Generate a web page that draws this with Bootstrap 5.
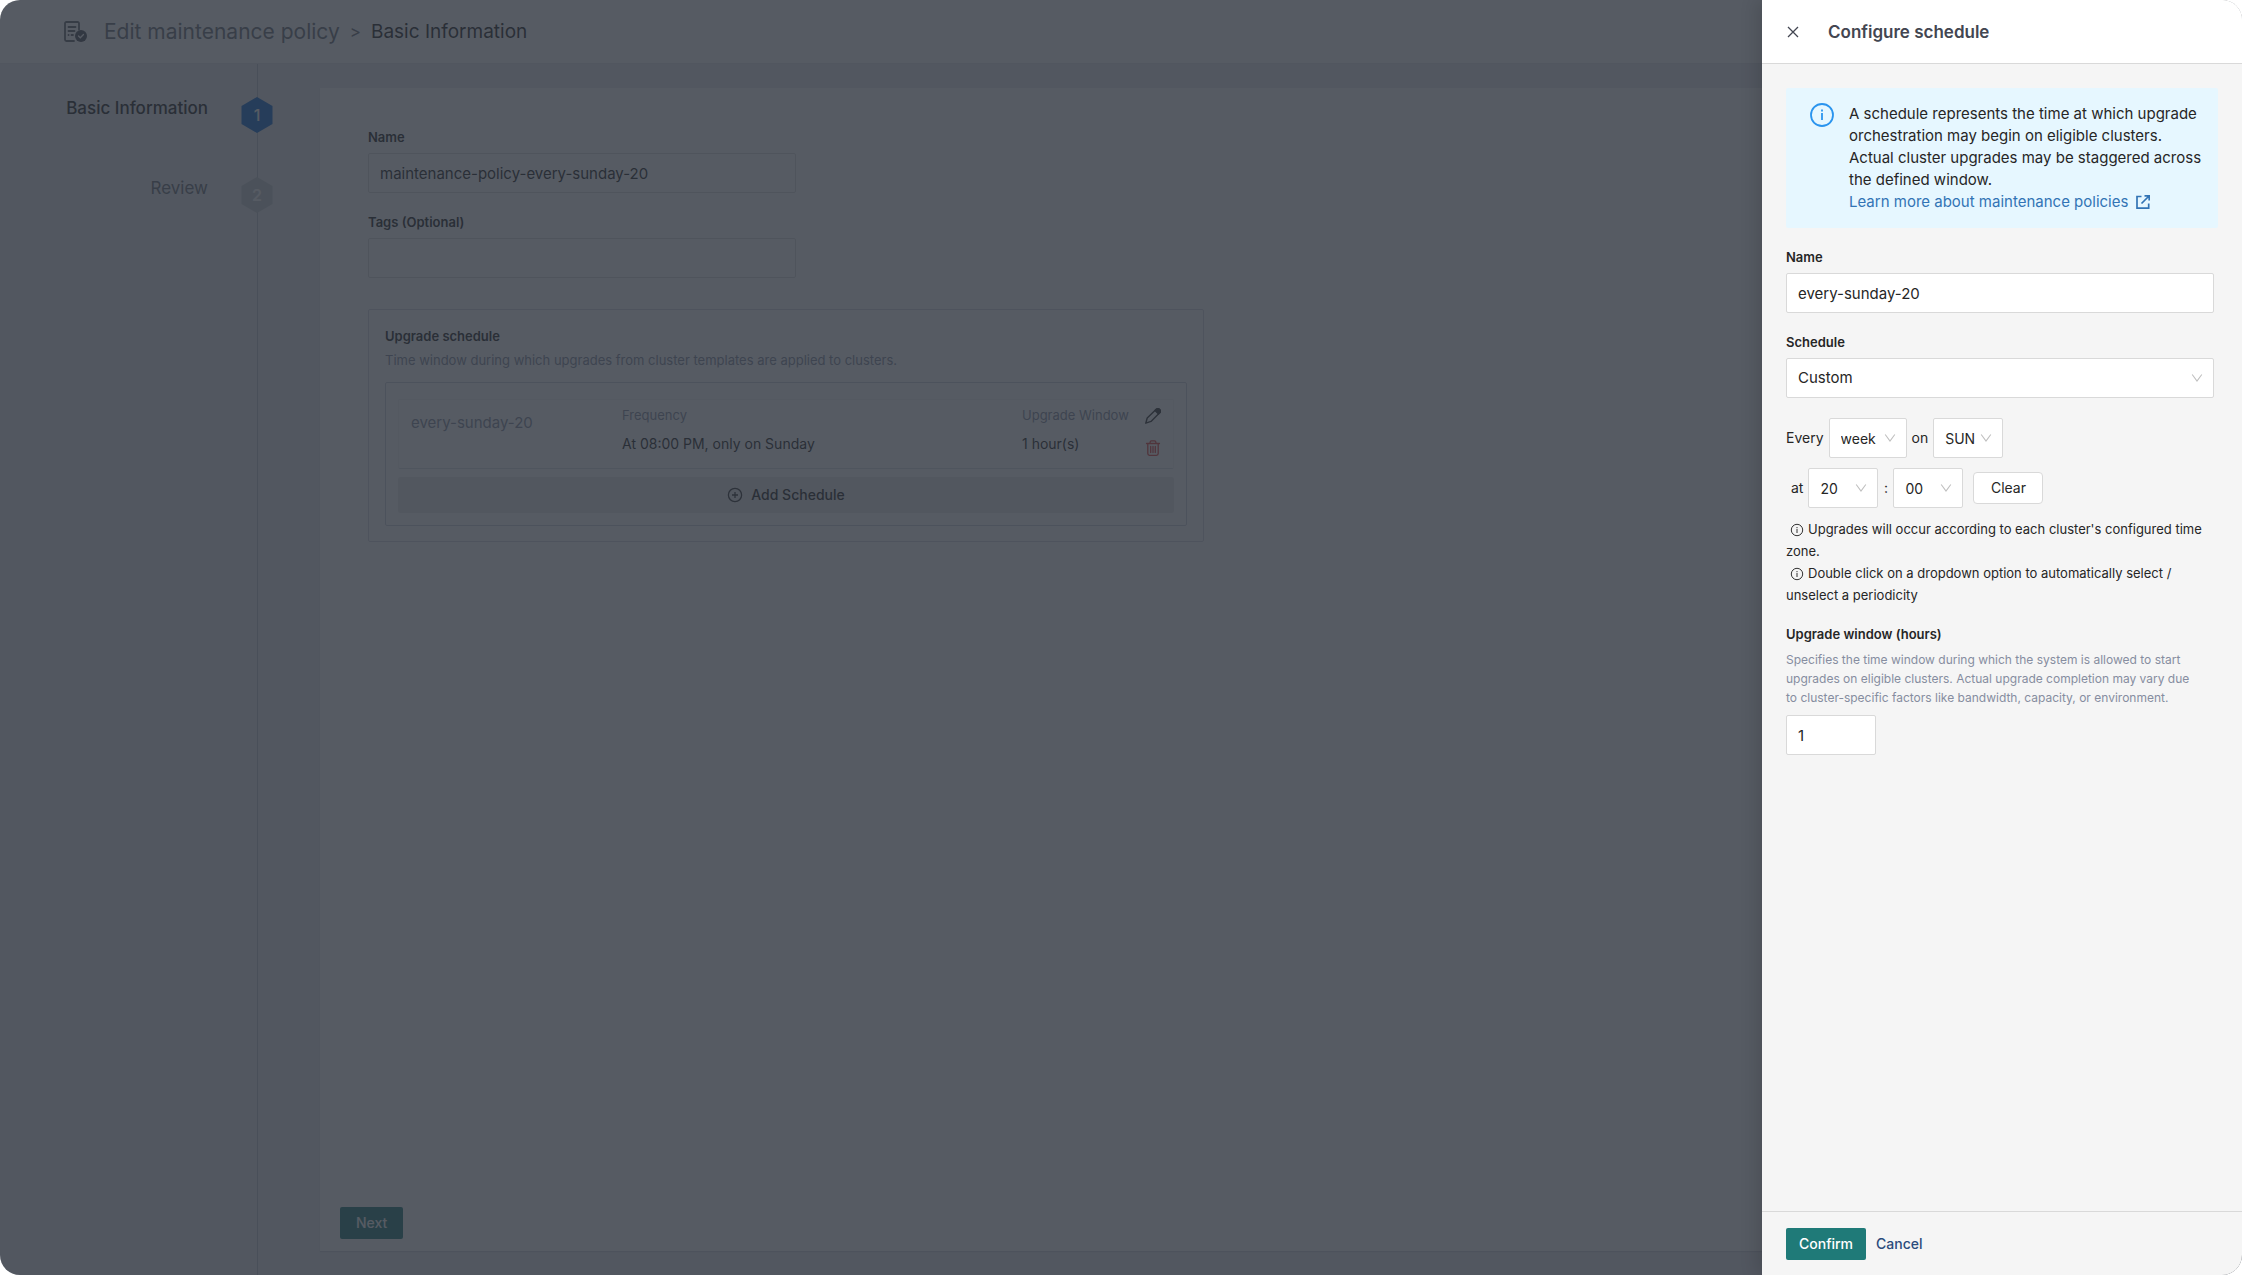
<!DOCTYPE html>
<html lang="en">
<head>
<meta charset="utf-8">
<meta name="viewport" content="width=device-width, initial-scale=1">
<title>Edit maintenance policy</title>
<link href="https://cdn.jsdelivr.net/npm/bootstrap@5.3.0/dist/css/bootstrap.min.css" rel="stylesheet">
<style>
  body { font-family: Inter, "Open Sans", sans-serif; font-size: 15px; line-height: 22px; color: #262626; background: #fff; }
  .app-window { border-radius: 20px; background: #e8eaee; height: 100vh; }
  .app-header { height: 64px; padding: 0 64px; background: #fff; border-bottom: 1px solid #e4e6ea; }
  .crumb-root { font-size: 21px; color: #6b6f78; }
  .crumb-sep { font-size: 17px; color: #6b6f78; margin: 0 10px; }
  .crumb-here { font-size: 19px; color: #262626; }
  .steps-col { width: 320px; }
  .step-list { position: relative; padding-top: 33px; width: 274px; }
  .step-list::before { content: ""; position: absolute; top: 0; bottom: 0; left: 257px; width: 1px; background: #bcc0ca; }
  .step-item { height: 80px; gap: 32px; font-size: 17px; color: #6b6f78; }
  .step-item.current { color: #262626; font-weight: 500; }
  .step-item svg { position: relative; }
  .page-panel { background: #fff; margin: 24px 24px 24px 0; padding: 38px 20px 12px; box-shadow: 0 1px 1px #d0d3da; }
  .panel-content { padding: 0 28px; }
  .panel-content .hint { font-size: 13px; }
  .field-label { font-size: 13px; line-height: 22px; font-weight: 600; color: #262626; margin-bottom: 5px; display: block; }
  .field-box { width: 428px; max-width: 100%; height: 40px; border: 1px solid #d9d9d9; border-radius: 2px; font-size: 15px; padding: 0 11px; color: #262626; background-color: #fff; }
  .form-group-gap { margin-bottom: 18px; }
  .schedule-box { width: 836px; max-width: 100%; margin-top: 31px; padding: 15px 16px; border: 1px solid #d5d7e2; border-radius: 2px; }
  .hint { font-size: 12px; line-height: 19px; color: #868da0; }
  .schedule-inner { margin-top: 12px; padding: 16px 12px 12px; border: 1px solid #cdd0da; border-radius: 2px; font-size: 14px; }
  .schedule-row { border: 1px solid #f2f3f5; border-bottom-color: #dcdee4; border-radius: 2px; height: 70px; padding: 4px 12px 0; margin-bottom: 8px; }
  .schedule-name { width: 211px; font-size: 15px; color: #868da0; padding-top: 8px; }
  .schedule-freq { width: 400px; }
  .cell-title { font-size: 13px; color: #868da0; margin-bottom: 7px; white-space: nowrap; }
  .add-btn { height: 36px; background: #ebebeb; border: 0; border-radius: 2px; font-weight: 500; color: #262626; }
  .tool-btn { border: 0; background: none; padding: 0; height: 16px; line-height: 0; }
  .solid-btn { height: 32px; border: 0; border-radius: 2px; background: #1f7a78; color: #fff; font-size: 14px; font-weight: 500; padding: 0 13px; }
  .next-btn { padding: 0 16px; color: #fff; }
  .shade { position: absolute; inset: 0; background: rgba(44, 50, 60, .8); }
  .offcanvas.schedule-drawer { position: absolute; --bs-offcanvas-width: 480px; --bs-offcanvas-bg: #f5f5f5; --bs-offcanvas-color: #262626; border: 0; box-shadow: -6px 0 16px rgba(0,0,0,.12); }
  .drawer-head { height: 64px; background: #fff; border-bottom: 1px solid #d9d9d9; padding: 0 24px; gap: 28px; }
  .drawer-title { font-size: 17px; line-height: 24px; font-weight: 600; color: #434651; }
  .drawer-body { padding: 24px 28px 0 24px; }
  .notice { background: #e6f7ff; padding: 15px 12px 15px 24px; gap: 15px; margin: 0 -4px 18px 0; border-radius: 2px; white-space: nowrap; }
  .notice a { color: #3274b5; text-decoration: none; }
  .drawer-body .field-box { width: 100%; }
  .form-select.field-box { --bs-form-select-bg-img: url("data:image/svg+xml,%3csvg xmlns='http://www.w3.org/2000/svg' viewBox='0 0 12 12'%3e%3cpath d='M1.2 2.5 6 9 10.800 2.500' fill='none' stroke='%23bfbfbf' stroke-width='1.100'/%3e%3c/svg%3e"); background-size: 12px 12px; background-position: right 10px center; }
  .drawer-body .pick-unit { width: 78px; }
  .drawer-body .pick { width: 70px; }
  .cron-row { gap: 5px; margin-bottom: 10px; font-size: 14px; }
  .cron-row .field-box { font-size: 14px; }
  .cron-time { padding-left: 5px; }
  .cron-time label { min-width: 5px; text-align: center; }
  .clear-btn { height: 32px; width: 70px; border: 1px solid #d9d9d9; border-radius: 4px; background: #fff; color: #262626; margin-left: 5px; }
  .note { font-size: 13px; line-height: 22px; margin: 0; white-space: nowrap; }
  .note-last { margin-bottom: 17px; }
  .drawer-body .hours-box { width: 90px; }
  .drawer-foot { height: 64px; border-top: 1px solid #d9d9d9; padding: 0 24px; gap: 10px; }
  .plain-btn { border: 0; background: none; padding: 0; color: #2b4b7c; font-size: 14px; font-weight: 500; }
</style>
<script src="https://cdn.jsdelivr.net/npm/bootstrap@5.3.0/dist/js/bootstrap.bundle.min.js"></script>
</head>
<body>
<div class="app-window position-relative overflow-hidden d-flex flex-column">
  <header class="app-header d-flex align-items-center flex-shrink-0">
    <svg width="24" height="22" viewBox="0 0 24 22" fill="none" stroke="#5f636c" stroke-width="1.800" stroke-linecap="round" aria-hidden="true">
      <path d="M15 8.500V2.500Q15 1 13.500 1H2.500Q1 1 1 2.500V18.500Q1 20 2.500 20H10"/>
      <path d="M4.500 6h7M4.500 10h6M7.500 14H9M4.500 14h.1"/>
      <circle cx="17" cy="15" r="6" fill="#4c5059" stroke="none"/>
      <path d="m14.500 15 1.800 1.800 3.200-3.300" stroke="#fff" stroke-width="1.300"/>
    </svg>
    <span class="crumb-root ms-3">Edit maintenance policy</span>
    <span class="crumb-sep">&gt;</span>
    <span class="crumb-here">Basic Information</span>
  </header>

  <div class="d-flex flex-grow-1">
    <nav class="steps-col flex-shrink-0 d-flex" aria-label="Steps">
      <div class="step-list">
        <div class="step-item current d-flex justify-content-end align-items-start">
          <span>Basic Information</span>
          <svg width="34" height="36" viewBox="0 0 34 36" aria-hidden="true"><path d="M17 0 32.500 9v18L17 36 1.500 27V9z" fill="#1169cf"/><text x="17" y="24" text-anchor="middle" font-size="16" fill="#fff">1</text></svg>
        </div>
        <div class="step-item d-flex justify-content-end align-items-start">
          <span>Review</span>
          <svg width="34" height="36" viewBox="0 0 34 36" aria-hidden="true"><path d="M17 0 32.500 9v18L17 36 1.500 27V9z" fill="#c8ccd0"/><text x="17" y="24" text-anchor="middle" font-size="16" font-weight="600" fill="#fff">2</text></svg>
        </div>
      </div>
    </nav>

    <main class="page-panel flex-grow-1 d-flex flex-column align-items-start">
      <div class="panel-content w-100">
        <div class="form-group-gap">
          <label class="field-label" for="policyName">Name</label>
          <input class="field-box" id="policyName" type="text" value="maintenance-policy-every-sunday-20">
        </div>
        <div>
          <label class="field-label" for="policyTags">Tags (Optional)</label>
          <input class="field-box" id="policyTags" type="text">
        </div>

        <section class="schedule-box">
          <h2 class="field-label mb-1">Upgrade schedule</h2>
          <div class="hint">Time window during which upgrades from cluster templates are applied to clusters.</div>
          <div class="schedule-inner">
            <div class="schedule-row d-flex">
              <div class="schedule-name">every-sunday-20</div>
              <div class="schedule-freq"><div class="cell-title">Frequency</div>At 08:00 PM, only on Sunday</div>
              <div><div class="cell-title">Upgrade Window</div>1 hour(s)</div>
              <div class="ms-auto d-flex flex-column gap-3 pt-1">
                <button class="tool-btn" type="button" aria-label="Edit schedule">
                  <svg width="16" height="16" viewBox="0 0 16 16" fill="none" stroke="#333" stroke-width="1.400" stroke-linejoin="round"><path d="M.8 15.200 2.200 10 11 1.600Q13-.2 14.600 1.600T14.400 5L6 13.400z"/><path d="m10 2.500 1.500-1.400Q13.200 0 14.700 1.500T15 4.600L13.500 6z" fill="#333"/></svg>
                </button>
                <button class="tool-btn" type="button" aria-label="Delete schedule">
                  <svg width="16" height="16" viewBox="0 0 16 16" fill="none" stroke="#e0403c" stroke-width="1.300" stroke-linecap="round"><path d="M1.500 3.500h13M5 3.500Q5 .8 6.500.8h3Q11 .8 11 3.500M2.800 3.500v10Q2.800 15.300 4.500 15.300h7Q13.200 15.300 13.200 13.500v-10M5.700 6.500v6M8 6.500v6M10.300 6.500v6"/></svg>
                </button>
              </div>
            </div>
            <button class="add-btn w-100 d-flex align-items-center justify-content-center gap-2" type="button">
              <svg width="16" height="16" viewBox="0 0 16 16" fill="none" stroke="#333" stroke-width="1.300"><circle cx="8" cy="8" r="6.600"/><path d="M8 5v6M5 8h6"/></svg>
              Add Schedule
            </button>
          </div>
        </section>
      </div>

      <button class="solid-btn next-btn mt-auto" type="button">Next</button>
    </main>
  </div>

  <div class="shade"></div>

  <aside class="offcanvas offcanvas-end show schedule-drawer" data-bs-backdrop="false" data-bs-scroll="true" aria-labelledby="drawerTitle">
    <div class="drawer-head d-flex align-items-center flex-shrink-0">
      <button class="tool-btn" type="button" aria-label="Close">
        <svg width="14" height="16" viewBox="0 0 14 16" fill="none" stroke="#434651" stroke-width="1.300"><path d="m2 3 10 10M12 3 2 13"/></svg>
      </button>
      <h1 class="drawer-title m-0" id="drawerTitle">Configure schedule</h1>
    </div>

    <div class="drawer-body flex-grow-1">
      <div class="notice d-flex">
        <svg class="flex-shrink-0" width="24" height="24" viewBox="0 0 24 24" fill="none" stroke="#2a94ee" stroke-width="1.800" aria-hidden="true"><circle cx="12" cy="12" r="11"/><path d="M12 10v7M12 6.500v2"/></svg>
        <div>A schedule represents the time at which upgrade<br>orchestration may begin on eligible clusters.<br>Actual cluster upgrades may be staggered across<br>the defined window.<br>
          <a class="d-inline-flex align-items-center gap-2" href="#">Learn more about maintenance policies
            <svg width="14" height="14" viewBox="0 0 14 14" fill="none" stroke="#3274b5" stroke-width="1.700" aria-hidden="true"><path d="M5.500 1.500H1v11.700h11.700V8.500M8.500.9h4.700v4.700M13 1 5.500 8.500"/></svg>
          </a>
        </div>
      </div>

      <div class="form-group-gap">
        <label class="field-label" for="schedName">Name</label>
        <input class="field-box" id="schedName" type="text" value="every-sunday-20">
      </div>
      <div class="mb-3 pb-1">
        <label class="field-label" for="schedType">Schedule</label>
        <select class="form-select field-box" id="schedType"><option>Custom</option></select>
      </div>

      <div class="cron-row d-flex align-items-center">
        <label for="unit">Every</label>
        <select class="form-select field-box pick-unit" id="unit"><option>week</option></select>
        <label for="day">on</label>
        <select class="form-select field-box pick" id="day"><option>SUN</option></select>
      </div>
      <div class="cron-row cron-time d-flex align-items-center">
        <label for="hour">at</label>
        <select class="form-select field-box pick" id="hour"><option>20</option></select>
        <label for="minute">:</label>
        <select class="form-select field-box pick" id="minute"><option>00</option></select>
        <button class="clear-btn" type="button">Clear</button>
      </div>

      <p class="note"><svg class="ms-1 me-1" width="14" height="14" viewBox="0 0 14 14" fill="none" stroke="#333" aria-hidden="true"><circle cx="7" cy="7" r="5.700"/><path d="M7 6v4M7 4v1.200"/></svg>Upgrades will occur according to each cluster's configured time<br>zone.</p>
      <p class="note note-last"><svg class="ms-1 me-1" width="14" height="14" viewBox="0 0 14 14" fill="none" stroke="#333" aria-hidden="true"><circle cx="7" cy="7" r="5.700"/><path d="M7 6v4M7 4v1.200"/></svg>Double click on a dropdown option to automatically select /<br>unselect a periodicity</p>

      <label class="field-label" for="hours">Upgrade window (hours)</label>
      <div class="hint mb-2">Specifies the time window during which the system is allowed to start<br>upgrades on eligible clusters. Actual upgrade completion may vary due<br>to cluster-specific factors like bandwidth, capacity, or environment.</div>
      <input class="field-box hours-box" id="hours" type="text" inputmode="numeric" value="1">
    </div>

    <div class="drawer-foot d-flex align-items-center flex-shrink-0">
      <button class="solid-btn" type="button">Confirm</button>
      <button class="plain-btn" type="button">Cancel</button>
    </div>
  </aside>
</div>
</body>
</html>
